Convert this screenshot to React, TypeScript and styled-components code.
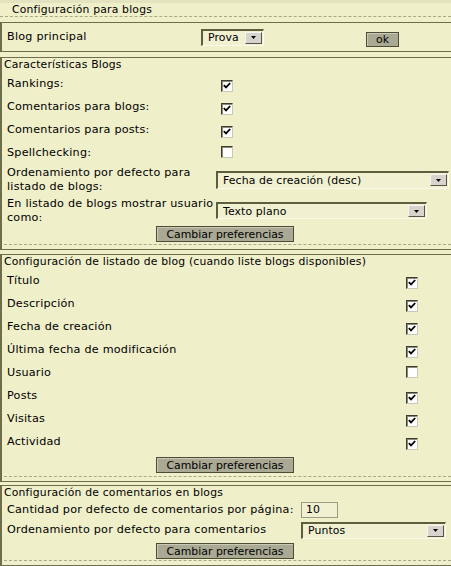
import React from 'react'
import styled, { createGlobalStyle } from 'styled-components'

const GlobalStyle = createGlobalStyle`
  html, body {
    margin: 0;
    padding: 0;
    background: #efefca;
  }
  body {
    font-family: 'DejaVu Sans', Verdana, sans-serif;
    color: #000;
  }
`

const Page = styled.div`
  width: 451px;
  background: #efefca;
`

const TopStrip = styled.div`
  height: 3px;
  background: #e3e3c0;
`

const PageTitle = styled.div`
  font-size: 10.8px;
  line-height: 13px;
  letter-spacing: 0.2px;
  padding-left: 12px;
  border-bottom: 1px dashed #a9a98a;
`

const Section = styled.div<{ $mt: number }>`
  margin-top: ${(p) => p.$mt}px;
  border-top: 1px solid #6e6e4c;
  border-bottom: 1px solid #6e6e4c;
  border-left: 2px solid #6e6e4c;
  padding: 0 0 0 2px;
`

const SectionTitle = styled.div`
  font-size: 10.8px;
  line-height: 14px;
  letter-spacing: 0.2px;
  white-space: nowrap;
`

const Row = styled.div<{ $label: number; $h: number }>`
  display: grid;
  grid-template-columns: ${(p) => p.$label}px 1fr;
  align-items: center;
  min-height: ${(p) => p.$h}px;
  padding: 1px 0;
  box-sizing: border-box;
  margin-left: 3px;
`

const TopRow = styled.div`
  display: grid;
  grid-template-columns: 194px 165px auto;
  align-items: center;
  min-height: 28px;
  margin-left: 3px;
`

const Label = styled.div`
  font-size: 11.2px;
  line-height: 14px;
  letter-spacing: 0.22px;
`

const CheckBox = styled.span<{ $mx: number }>`
  display: inline-flex;
  align-items: center;
  justify-content: center;
  width: 12px;
  height: 12px;
  box-sizing: border-box;
  margin-left: ${(p) => p.$mx}px;
  background: #fff;
  border-top: 1px solid #3c3c30;
  border-left: 1px solid #3c3c30;
  border-right: 1px solid #c8c8b8;
  border-bottom: 1px solid #c8c8b8;
  box-shadow: inset 1px 1px 0 #8a8a7a;
`

function Check({ on, mx }: { on: boolean; mx: number }) {
  return (
    <div>
      <CheckBox $mx={mx}>
        {on && (
          <svg width="8" height="7" viewBox="0 0 8 7">
            <path d="M0.8 3.2 L3 5.4 L7.2 1" stroke="#000" strokeWidth="1.8" fill="none" />
          </svg>
        )}
      </CheckBox>
    </div>
  )
}

const SelectBox = styled.div<{ $w: number; $h: number }>`
  display: flex;
  align-items: center;
  width: ${(p) => p.$w}px;
  height: ${(p) => p.$h}px;
  box-sizing: border-box;
  background: #f1f1d2;
  border-top: 2px solid #5e5e3e;
  border-left: 2px solid #5e5e3e;
  border-right: 1px solid #fbfbec;
  border-bottom: 1px solid #fbfbec;
  padding: 0 1px 0 5px;
  font-size: 10.9px;
  letter-spacing: 0.1px;
`

const SelectText = styled.span`
  flex: 1;
  white-space: nowrap;
  overflow: hidden;
`

const Arrow = styled.span`
  display: flex;
  align-items: center;
  justify-content: center;
  width: 17px;
  height: 12px;
  box-sizing: border-box;
  background: #d6d4cc;
  border-top: 1px solid #f4f4f0;
  border-left: 1px solid #f4f4f0;
  border-right: 1px solid #55554a;
  border-bottom: 1px solid #55554a;
`

function Select({ value, w, h }: { value: string; w: number; h: number }) {
  return (
    <SelectBox $w={w} $h={h}>
      <SelectText>{value}</SelectText>
      <Arrow>
        <svg width="5" height="3" viewBox="0 0 5 3">
          <path d="M0 0 H5 L2.5 3 Z" fill="#000" />
        </svg>
      </Arrow>
    </SelectBox>
  )
}

const Button = styled.button<{ $w: number; $h?: number }>`
  width: ${(p) => p.$w}px;
  height: ${(p) => p.$h ?? 16}px;
  padding: 0;
  background: #aaa994;
  border: 1px solid #4b4b36;
  box-shadow: inset 1px 1px 0 #c9c9b6;
  font-family: 'DejaVu Sans', Verdana, sans-serif;
  font-size: 10.9px;
  line-height: 13px;
  color: #000;
`

const ButtonRow = styled.div<{ $pt: number; $pb: number }>`
  display: flex;
  padding: ${(p) => p.$pt}px 0 ${(p) => p.$pb}px 152px;
  border-bottom: 1px dashed #a9a98a;
  margin-bottom: 4px;
`

const TextInput = styled.div`
  width: 37px;
  height: 16px;
  box-sizing: border-box;
  border: 1px solid #9c9c82;
  background: #f1f1d2;
  font-size: 10.9px;
  line-height: 14px;
  padding-left: 4px;
`

const featureRows: [string, boolean][] = [
  ['Rankings:', true],
  ['Comentarios para blogs:', true],
  ['Comentarios para posts:', true],
  ['Spellchecking:', false],
]

const listRows: [string, boolean][] = [
  ['Título', true],
  ['Descripción', true],
  ['Fecha de creación', true],
  ['Última fecha de modificación', true],
  ['Usuario', false],
  ['Posts', true],
  ['Visitas', true],
  ['Actividad', true],
]

export default function App() {
  return (
    <Page>
      <GlobalStyle />
      <TopStrip />
      <PageTitle>Configuración para blogs</PageTitle>

      <Section $mt={5}>
        <TopRow>
          <Label>Blog principal</Label>
          <Select value="Prova" w={63} h={17} />
          <div>
            <Button $w={33} $h={15}>ok</Button>
          </div>
        </TopRow>
      </Section>

      <Section $mt={5}>
        <SectionTitle>Características Blogs</SectionTitle>
        {featureRows.map(([label, on]) => (
          <Row key={label} $label={209} $h={23}>
            <Label>{label}</Label>
            <Check on={on} mx={5} />
          </Row>
        ))}
        <Row $label={209} $h={31}>
          <Label>
            Ordenamiento por defecto para
            <br />
            listado de blogs:
          </Label>
          <Select value="Fecha de creación (desc)" w={233} h={18} />
        </Row>
        <Row $label={209} $h={31}>
          <Label>
            En listado de blogs mostrar usuario
            <br />
            como:
          </Label>
          <Select value="Texto plano" w={211} h={17} />
        </Row>
        <ButtonRow $pt={0} $pb={2}>
          <Button $w={138}>Cambiar preferencias</Button>
        </ButtonRow>
      </Section>

      <Section $mt={4}>
        <SectionTitle>Configuración de listado de blog (cuando liste blogs disponibles)</SectionTitle>
        {listRows.map(([label, on]) => (
          <Row key={label} $label={394} $h={23}>
            <Label>{label}</Label>
            <Check on={on} mx={5} />
          </Row>
        ))}
        <ButtonRow $pt={4} $pb={3}>
          <Button $w={138}>Cambiar preferencias</Button>
        </ButtonRow>
      </Section>

      <Section $mt={3}>
        <SectionTitle>Configuración de comentarios en blogs</SectionTitle>
        <Row $label={294} $h={20}>
          <Label>Cantidad por defecto de comentarios por página:</Label>
          <TextInput>10</TextInput>
        </Row>
        <Row $label={294} $h={20}>
          <Label>Ordenamiento por defecto para comentarios</Label>
          <Select value="Puntos" w={145} h={17} />
        </Row>
        <ButtonRow $pt={3} $pb={1}>
          <Button $w={138}>Cambiar preferencias</Button>
        </ButtonRow>
      </Section>
    </Page>
  )
}
